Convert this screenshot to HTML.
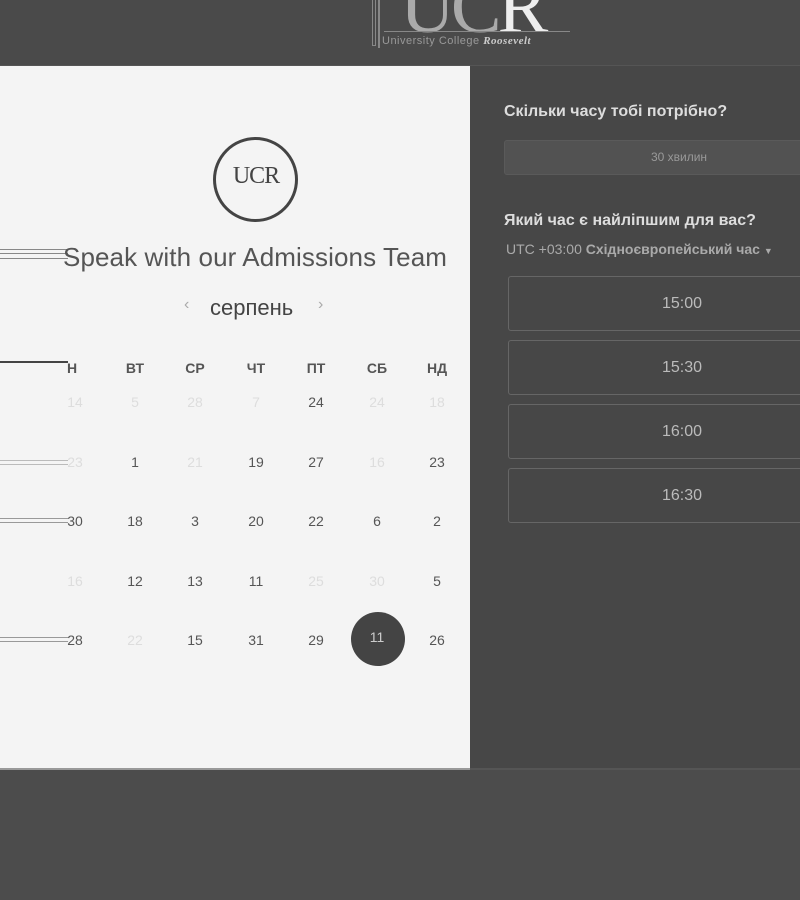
<!DOCTYPE html>
<html><head><meta charset="utf-8"><style>
*{margin:0;padding:0;box-sizing:border-box}
body{width:800px;height:900px;background:#4c4c4c;position:relative;overflow:hidden;font-family:"Liberation Sans",sans-serif}
.a{position:absolute}
.hdr{left:0;top:0;width:800px;height:66px;background:#4a4a4a;border-bottom:1px solid #555}
.left{left:0;top:66px;width:470px;height:704px;background:#f4f4f4;border-bottom:2px solid #999}
.right{left:470px;top:66px;width:330px;height:704px;background:#474747;border-bottom:2px solid #555}
.c{text-align:center;width:50px;margin-left:-25px;font-size:14px}
.wd{font-weight:bold;font-size:14px;color:#555}
.n{color:#555}
.f{color:#ddd}
.slot{left:508px;width:300px;height:55px;border:1px solid #666;border-radius:3px;color:#bbb;font-size:16px;text-align:center;line-height:53px;padding-left:48px}
.ln{height:1px;background:#888;left:0}
</style></head><body>
<div class="a hdr">
  <div class="a" style="left:372px;top:0;width:4px;height:46px;border:1px solid #888;border-top:none"></div>
  <div class="a" style="left:378px;top:0;width:2px;height:48px;background:#888"></div>
  <div class="a" style="left:400px;top:-36px;font-family:'Liberation Serif',serif;font-size:76px;color:#aaa;letter-spacing:-4px">UC<span style="color:#eee">R</span></div>
  <div class="a" style="left:384px;top:31px;width:186px;height:1px;background:#888"></div>
  <div class="a" style="left:382px;top:35px;font-size:11px;color:#999;font-family:'Liberation Sans',sans-serif;letter-spacing:0.5px">University College <i style="font-family:'Liberation Serif',serif;color:#ccc;font-weight:bold">Roosevelt</i></div>
</div>
<div class="a left">
  <div class="a" style="left:213px;top:71px;width:85px;height:85px;border:3px solid #444;border-radius:50%"></div>
  <div class="a" style="left:225px;top:97px;width:62px;text-align:center;font-family:'Liberation Serif',serif;font-size:24px;color:#444;letter-spacing:-1px">UCR</div>
  <div class="a ln" style="top:183px;width:68px"></div>
  <div class="a ln" style="top:187px;width:68px"></div>
  <div class="a ln" style="top:192px;width:68px"></div>
  <div class="a" style="left:63px;top:176px;font-size:26px;color:#555;letter-spacing:0.1px">Speak with our Admissions Team</div>
  <div class="a" style="left:184px;top:230px;font-size:16px;color:#aaa">‹</div>
  <div class="a" style="left:210px;top:229px;font-size:22px;color:#444">серпень</div>
  <div class="a" style="left:318px;top:230px;font-size:16px;color:#aaa">›</div>
  <div class="a ln" style="top:295px;width:68px;background:#444;height:2px"></div>
  <div class="a ln" style="top:394px;width:68px;background:#bbb"></div><div class="a ln" style="top:398px;width:68px;background:#bbb"></div>
  <div class="a ln" style="top:452px;width:68px;background:#999"></div><div class="a ln" style="top:456px;width:68px;background:#999"></div>
  <div class="a ln" style="top:571px;width:68px;background:#999"></div><div class="a ln" style="top:575px;width:68px;background:#999"></div>
  <div class="a" style="left:351px;top:546px;width:54px;height:54px;border-radius:50%;background:#444"></div>
  <div id="cal"></div>
</div>
<div class="a right">
  <div class="a" style="left:34px;top:37px;font-size:16px;font-weight:bold;color:#ddd">Скільки часу тобі потрібно?</div>
  <div class="a" style="left:34px;top:74px;width:310px;height:35px;background:#525252;border:1px solid #5a5a5a;border-radius:3px;color:#999;font-size:12px;text-align:center;line-height:33px;padding-left:40px">30 хвилин</div>
  <div class="a" style="left:34px;top:146px;font-size:16px;font-weight:bold;color:#ddd">Який час є найліпшим для вас?</div>
  <div class="a" style="left:36px;top:175px;font-size:14px;color:#aaa">UTC +03:00 <b>Східноєвропейський час</b> <span style="font-size:9px">▼</span></div>
</div>
<div class="a slot" style="top:276px">15:00</div>
<div class="a slot" style="top:340px">15:30</div>
<div class="a slot" style="top:404px">16:00</div>
<div class="a slot" style="top:468px">16:30</div>
<script>
var xs=[75,135,195,256,316,377,437],ys=[294,328,388,447,507,566];
var h=['ПН','ВТ','СР','ЧТ','ПТ','СБ','НД'];
var d=[['14f','5f','28f','7f','24','24f','18f'],['23f','1','21f','19','27','16f','23'],['30','18','3','20','22','6','2'],['16f','12','13','11','25f','30f','5'],['28','22f','15','31','29','11w','26']];
var s='';
for(var i=0;i<7;i++){s+='<div class="a c wd" style="left:'+xs[i]+'px;top:'+ys[0]+'px">'+(i==0?'<span style="margin-left:-6px">Н</span>':h[i])+'</div>';}
for(var r=0;r<5;r++)for(var i=0;i<7;i++){var v=d[r][i],cl='n',t=v;if(v.slice(-1)=='f'){cl='f';t=v.slice(0,-1)}else if(v.slice(-1)=='w'){cl='';t=v.slice(0,-1)}
s+='<div class="a c '+cl+'" style="left:'+xs[i]+'px;top:'+ys[r+1]+'px;'+(cl==''?'color:#ccc;margin-top:-3px':'')+'">'+t+'</div>';}
document.getElementById('cal').innerHTML=s;
</script>
</body></html>
